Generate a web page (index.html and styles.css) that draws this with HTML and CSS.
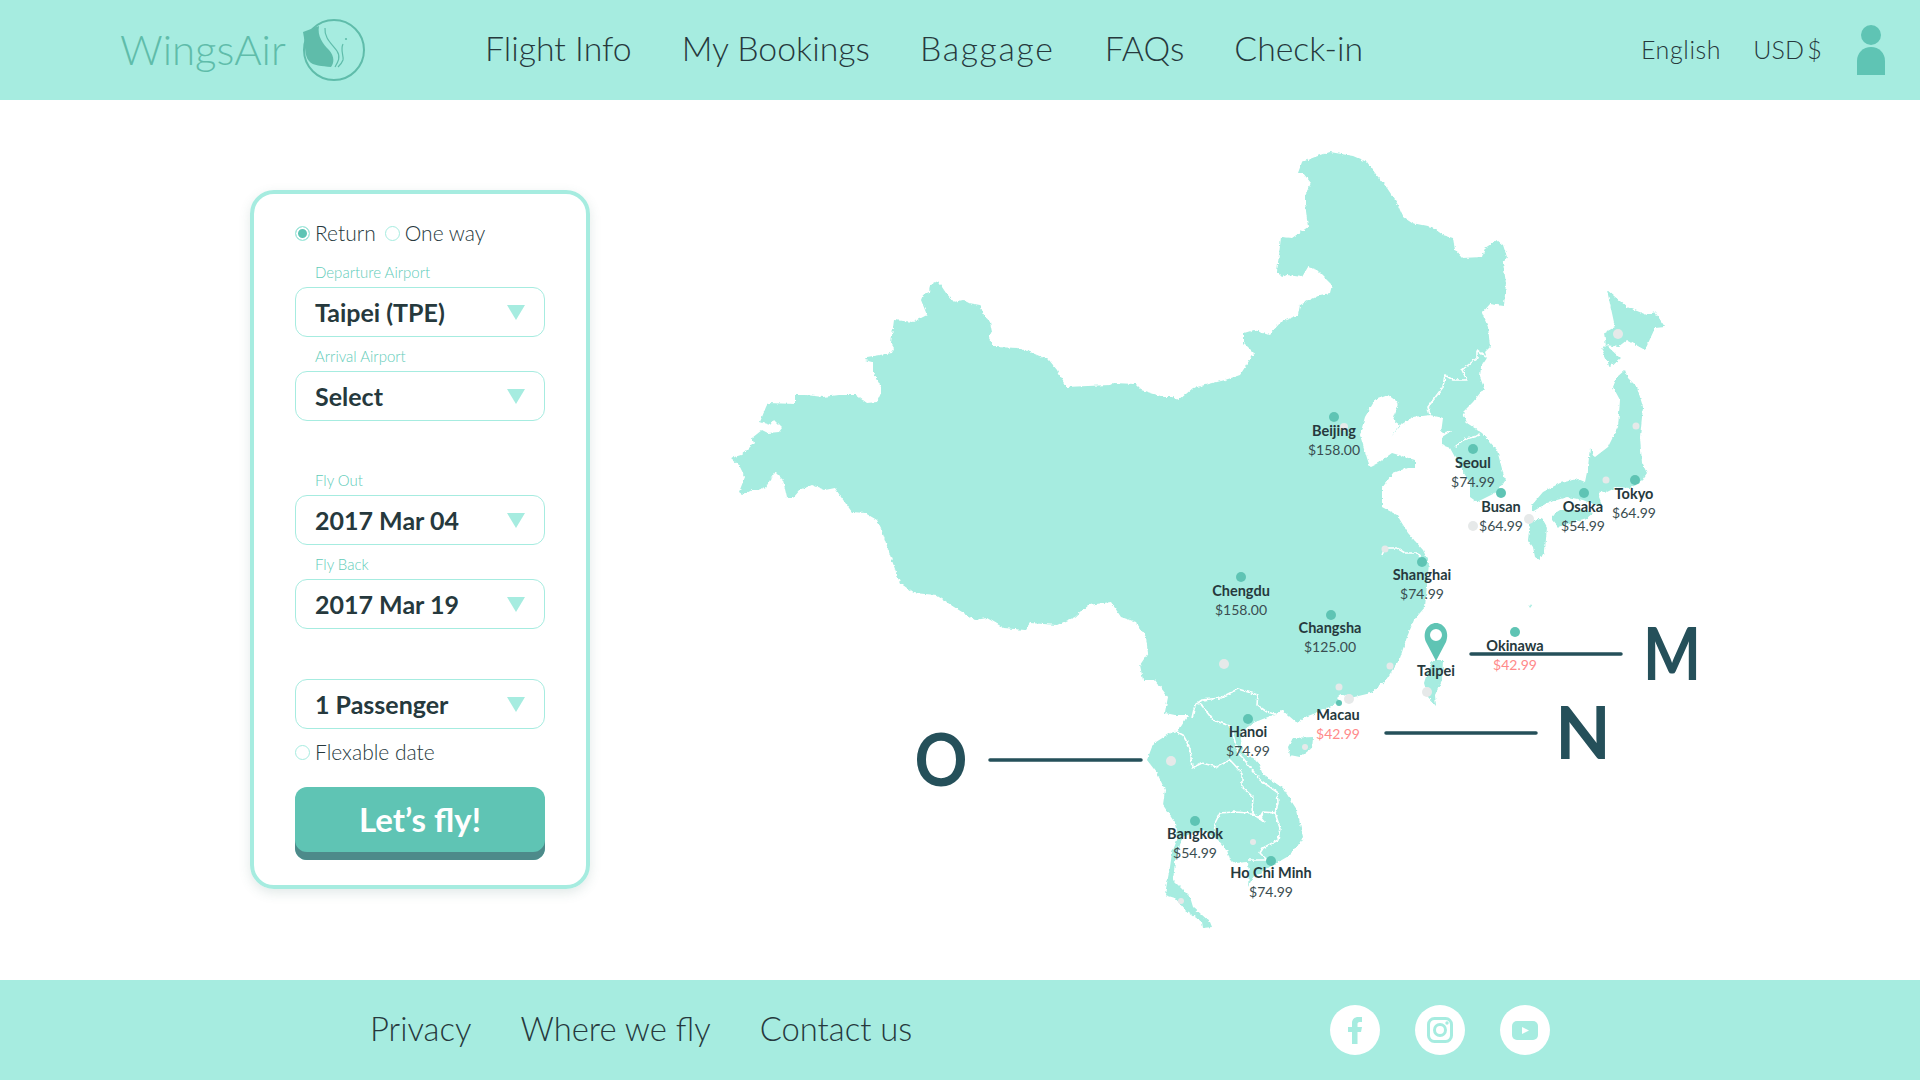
FILE: index.html
```html
<!DOCTYPE html>
<html lang="en">
<head>
    <meta charset="UTF-8">
    <meta name="viewport" content="width=device-width, initial-scale=1.0">
    <title>WingsAir</title>
    <link rel="stylesheet" href="styles.css">
</head>
<body>
    <header class="topbar">
        <a class="logo">
            <span class="logo-text">WingsAir</span>
            <svg class="logo-mark" width="68" height="64" viewBox="300 18 68 64">
                <ellipse cx="334" cy="50" rx="30" ry="30" fill="none" stroke="#5fbcaa" stroke-width="2"/>
                <path d="M303 32 L319 26 C317 36 323 44 329 50 C335 57 334 63 331 67 C322 66 313 66 309 61 C304 55 306 47 303 32 Z" fill="#5fbcaa"/>
                <path d="M325 28 C324 38 332 44 337 51 C341 57 338 62 335 67" fill="none" stroke="#5fbcaa" stroke-width="1.2"/>
                <path d="M343 44 C340 50 344 56 343 60 C342 63 340 65 338 67" fill="none" stroke="#5fbcaa" stroke-width="1.2"/>
                <circle cx="346" cy="39" r="1.1" fill="#5fbcaa"/>
            </svg>
        </a>
        <nav class="mainnav">
            <a>Flight Info</a>
            <a>My Bookings</a>
            <a class="wide">Baggage</a>
            <a>FAQs</a>
            <a>Check-in</a>
        </nav>
        <div class="topright">
            <a>English</a>
            <a class="currency">USD $</a>
            <svg class="person" width="28" height="50" viewBox="0 0 28 50">
                <circle cx="14" cy="10" r="10"/>
                <path d="M0 50 V36 C0 28 6 22 14 22 C22 22 28 28 28 36 V50 Z"/>
            </svg>
        </div>
    </header>

    <main class="page">
        <form class="card">
            <div class="radios">
                <label class="check"><span class="radio on"></span>Return</label>
                <label class="check"><span class="radio"></span>One way</label>
            </div>

            <div class="field">
                <div class="field-label">Departure Airport</div>
                <div class="select">Taipei (TPE)<span class="arrow"></span></div>
            </div>
            <div class="field">
                <div class="field-label">Arrival Airport</div>
                <div class="select">Select<span class="arrow"></span></div>
            </div>

            <div class="field group">
                <div class="field-label">Fly Out</div>
                <div class="select">2017 Mar 04<span class="arrow"></span></div>
            </div>
            <div class="field">
                <div class="field-label">Fly Back</div>
                <div class="select">2017 Mar 19<span class="arrow"></span></div>
            </div>

            <div class="field group">
                <div class="select">1 Passenger<span class="arrow"></span></div>
            </div>

            <label class="check flex-date"><span class="radio"></span>Flexable date</label>
            <button class="go" type="button">Let’s fly!</button>
        </form>

        <svg class="map" width="1000" height="880" viewBox="720 100 1000 880">
            <defs>
                <!-- makes the traced coast a bit rough -->
                <filter id="rough" x="-2%" y="-2%" width="104%" height="104%">
                    <feTurbulence type="fractalNoise" baseFrequency="0.28" numOctaves="2" seed="4"/>
                    <feDisplacementMap in="SourceGraphic" scale="3.5" xChannelSelector="R" yChannelSelector="G"/>
                </filter>
            </defs>
            <g class="rough">
                <g class="land">
                    <path d="M1298 173 L1302 162 1315 157 1330 152 1353 156 1367 162 1375 173 1387 188 1397 203 1403 217 1412 223 1432 227 1443 235 1453 238 1455 250 1462 258 1482 257 1485 248 1497 240 1503 245 1507 257 1503 263 1506 283 1504 306 1490 304 1482 313 1488 327 1490 347 1485 352 1487 358 1481 367 1480 377 1484 388 1473 402 1463 412 1467 423 1482 433 1497 450 1505 480 1497 492 1477 502 1470 497 1470 483 1462 470 1450 448 1442 445 1442 437 1453 430 1441 433 1443 418 1430 415 1413 417 1402 424 1391 437 1400 425 1393 420 1399 403 1388 395 1375 400 1365 417 1360 435 1367 458 1370 467 1378 463 1392 453 1415 460 1415 468 1407 468 1393 473 1382 488 1382 507 1397 515 1408 533 1423 550 1429 563 1425 607 1414 620 1407 637 1400 658 1386 680 1371 693 1350 698 1339 693 1338 703 1316 713 1305 717 1297 723 1302 728 1296 722 1282 710 1275 714 1253 723 1240 733 1243 753 1258 762 1263 775 1283 788 1297 810 1303 837 1297 847 1287 857 1273 865 1253 877 1248 887 1249 873 1248 862 1235 863 1230 860 1227 850 1218 840 1203 830 1195 832 1183 837 1178 850 1175 862 1173 880 1178 885 1190 897 1193 907 1210 922 1212 927 1203 928 1202 922 1185 910 1175 898 1165 895 1167 883 1170 867 1172 853 1177 840 1175 823 1163 805 1165 790 1157 773 1147 760 1152 747 1153 744 1170 733 1178 731 1182 725 1188 715 1175 715 1165 713 1168 697 1155 680 1143 680 1140 665 1148 653 1146 637 1136 622 1121 617 1111 602 1089 605 1075 617 1057 625 1030 623 1025 630 1004 628 987 618 975 620 954 607 936 595 914 593 900 583 890 555 881 528 877 520 865 513 852 512 841 497 835 488 825 490 812 485 800 490 793 498 787 498 783 480 775 472 770 480 766 487 758 490 752 490 743 495 739 492 745 477 739 465 731 458 741 455 747 450 754 443 752 438 762 430 768 433 779 432 782 428 774 420 770 425 760 422 766 407 768 403 795 404 795 395 806 395 823 397 839 395 856 395 867 403 877 402 881 393 881 387 873 372 873 362 865 360 867 357 892 353 894 348 891 343 894 320 913 322 927 315 921 300 923 295 929 292 930 285 938 281 946 293 954 302 963 300 969 303 980 305 984 315 990 322 992 332 989 338 994 347 1018 348 1030 352 1049 360 1057 370 1066 387 1110 385 1114 383 1135 384 1141 390 1164 397 1173 397 1179 400 1193 388 1225 380 1240 375 1254 353 1244 343 1244 333 1254 330 1269 335 1281 322 1298 315 1300 305 1320 295 1330 293 1332 285 1317 270 1308 267 1302 277 1287 275 1282 277 1277 272 1281 237 1292 238 1308 227 1305 203 1305 195 1311 183 1303 173 Z"/>
                    <path d="M1288 747 L1293 738 1313 737 1312 748 1300 757 1290 755 Z"/>
                    <path d="M1433 660 L1443 660 1442 680 1435 695 1436 706 1428 697 1424 683 1428 670 Z"/>
                    <path d="M1607 290 L1627 307 1647 315 1655 312 1665 327 1655 328 1645 350 1627 340 1618 347 1607 345 1602 350 1610 367 1620 358 1606 345 1604 333 1615 327 Z"/>
                    <path d="M1625 370 L1628 378 1637 387 1643 407 1640 437 1642 463 1647 473 1640 483 1630 488 1617 487 1607 492 1600 490 1599 497 1603 507 1590 503 1583 500 1567 497 1547 503 1532 512 1532 505 1543 492 1560 483 1578 479 1585 482 1588 467 1590 448 1595 457 1608 447 1618 427 1620 400 1613 387 1617 377 Z"/>
                    <path d="M1552 515 L1560 510 1583 510 1593 513 1587 518 1570 523 1558 527 1552 520 Z"/>
                    <path d="M1530 523 L1542 518 1547 527 1545 550 1540 560 1535 557 1533 547 1528 540 Z"/>
                    <path d="M1529 606 L1533 604 1530 608 Z"/>
                </g>

                <g class="borders">
                    <path d="M1430 415 L1428 407 1443 387 1445 375 1453 380 1467 380 1462 370 1477 358 1477 350 1486 357"/>
                    <path d="M1455 447 L1463 440 1480 435"/>
                    <path d="M1382 555 L1385 548 1397 548 1405 553 1417 553 1421 558"/>
                    <path d="M1192 718 L1195 705 1202 700 1220 698 1238 689 1258 695 1257 705 1267 712 1275 714"/>
                    <path d="M1200 703 L1213 720 1230 726 1234 738 1238 753 1243 758 1260 780 1277 792 1278 803 1275 813 1263 812 1260 817 1264 822 1252 813"/>
                    <path d="M1177 732 L1183 735 1190 748 1192 768 1202 763 1217 767 1230 760 1242 773 1242 787 1253 797 1252 813 1233 812 1220 813 1215 823 1214 840"/>
                    <path d="M1275 813 L1280 828 1278 840 1263 848 1260 853 1267 860 1248 860"/>
                </g>
            </g>

            <g class="spot">
                <circle cx="1344" cy="427" r="4"/>
                <circle cx="1618" cy="334" r="5"/>
                <circle cx="1636" cy="426" r="3.5"/>
                <circle cx="1606" cy="480" r="3.5"/>
                <circle cx="1473" cy="526" r="5"/>
                <circle cx="1529" cy="519" r="5"/>
                <circle cx="1385" cy="549" r="3.5"/>
                <circle cx="1224" cy="664" r="5"/>
                <circle cx="1390" cy="666" r="3.5"/>
                <circle cx="1339" cy="687" r="3.5"/>
                <circle cx="1349" cy="699" r="5"/>
                <circle cx="1427" cy="692" r="5"/>
                <circle cx="1305" cy="747" r="3"/>
                <circle cx="1171" cy="761" r="5"/>
                <circle cx="1253" cy="842" r="3"/>
                <circle cx="1181" cy="901" r="3"/>
            </g>

            <g class="stop"><circle cx="1334" cy="417" r="5"/><text class="city" x="1334" y="436">Beijing</text><text class="fare" x="1334" y="455">$158.00</text></g>
            <g class="stop"><circle cx="1473" cy="449" r="5"/><text class="city" x="1473" y="468">Seoul</text><text class="fare" x="1473" y="487">$74.99</text></g>
            <g class="stop"><circle cx="1501" cy="493" r="5"/><text class="city" x="1501" y="512">Busan</text><text class="fare" x="1501" y="531">$64.99</text></g>
            <g class="stop"><circle cx="1584" cy="493" r="5"/><text class="city" x="1583" y="512">Osaka</text><text class="fare" x="1583" y="531">$54.99</text></g>
            <g class="stop"><circle cx="1635" cy="480" r="5"/><text class="city" x="1634" y="499">Tokyo</text><text class="fare" x="1634" y="518">$64.99</text></g>
            <g class="stop"><circle cx="1422" cy="562" r="5"/><text class="city" x="1422" y="580">Shanghai</text><text class="fare" x="1422" y="599">$74.99</text></g>
            <g class="stop"><circle cx="1241" cy="577" r="5"/><text class="city" x="1241" y="596">Chengdu</text><text class="fare" x="1241" y="615">$158.00</text></g>
            <g class="stop"><circle cx="1331" cy="615" r="5"/><text class="city" x="1330" y="633">Changsha</text><text class="fare" x="1330" y="652">$125.00</text></g>
            <g class="stop"><circle cx="1339" cy="703" r="3"/><text class="city" x="1338" y="720">Macau</text><text class="fare deal" x="1338" y="739">$42.99</text></g>
            <g class="stop"><circle cx="1248" cy="719" r="5"/><text class="city" x="1248" y="737">Hanoi</text><text class="fare" x="1248" y="756">$74.99</text></g>
            <g class="stop"><circle cx="1195" cy="821" r="5"/><text class="city" x="1195" y="839">Bangkok</text><text class="fare" x="1195" y="858">$54.99</text></g>
            <g class="stop"><circle cx="1271" cy="861" r="5"/><text class="city" x="1271" y="878">Ho Chi Minh</text><text class="fare" x="1271" y="897">$74.99</text></g>
            <g class="stop"><circle cx="1515" cy="632" r="5"/><text class="city" x="1515" y="651">Okinawa</text><text class="fare deal" x="1515" y="670">$42.99</text></g>

            <path class="stop-pin" fill-rule="evenodd" d="M1436 661 L1426 642 C1422 632 1428 623 1436 623 C1444 623 1450 632 1446 642 Z M1436 629 A6 6 0 1 0 1436 641 A6 6 0 1 0 1436 629 Z"/>
            <text class="city" x="1436" y="676">Taipei</text>

            <line class="callout" x1="990" y1="760" x2="1141" y2="760"/>
            <line class="callout" x1="1386" y1="733" x2="1536" y2="733"/>
            <line class="callout" x1="1471" y1="654" x2="1621" y2="654"/>
            <text class="mark" x="941" y="786" textLength="53" lengthAdjust="spacingAndGlyphs">O</text>
            <text class="mark" x="1583" y="759">N</text>
            <text class="mark" x="1672" y="680" textLength="58" lengthAdjust="spacingAndGlyphs">M</text>
        </svg>
    </main>

    <footer class="bottombar">
        <nav class="footnav">
            <a>Privacy</a>
            <a>Where we fly</a>
            <a>Contact us</a>
        </nav>
        <div class="social">
            <svg width="50" height="50" viewBox="0 0 50 50">
                <circle class="disc" cx="25" cy="25" r="25"/>
                <path class="glyph" d="M22 39 V27 H18 V22 H22 V18 C22 14 25 12 28 12 H32 V17 H29.5 C28 17 27.5 18 27.5 19 V22 H32 L31 27 H27.5 V39 Z"/>
            </svg>
            <svg width="50" height="50" viewBox="0 0 50 50">
                <circle class="disc" cx="25" cy="25" r="25"/>
                <rect class="line" x="13.5" y="13.5" width="23" height="23" rx="6"/>
                <circle class="line" cx="25" cy="25" r="5.5"/>
                <circle class="glyph" cx="32" cy="18" r="1.7"/>
            </svg>
            <svg width="50" height="50" viewBox="0 0 50 50">
                <circle class="disc" cx="25" cy="25" r="25"/>
                <rect class="glyph" x="12" y="16" width="26" height="19" rx="5"/>
                <path class="disc" d="M22 22 L29 25.5 22 29 Z"/>
            </svg>
        </div>
    </footer>
</body>
</html>
```

FILE: styles.css
```css
* {
    box-sizing: border-box;
}
body {
    margin: 0;
    font-family: Lato, "Open Sans", sans-serif;
    color: #26393d;
    background-color: #fff;
}

/* top bar */
.topbar {
    height: 100px;
    background-color: #a6ece0;
    display: flex;
    align-items: center;
    padding-left: 120px;
    padding-right: 35px;
}
.logo {
    display: flex;
    align-items: center;
    width: 365px;
}
.logo-text {
    font-size: 42px;
    font-weight: 300;
    color: #5fbcaa;
    width: 180px;
    padding-bottom: 2px;
}
.mainnav {
    display: flex;
    gap: 50px;
    padding-bottom: 5px;
    font-size: 33.8px;
    font-weight: 300;
}
.wide {
    letter-spacing: 1.7px;
}
.topright {
    margin-left: auto;
    display: flex;
    align-items: center;
    gap: 32px;
    font-size: 25px;
    font-weight: 300;
    letter-spacing: 0.6px;
}
.topright a {
    padding-bottom: 3px;
}
.currency {
    letter-spacing: 0.2px;
    word-spacing: -4px;
}
.person {
    margin-left: 3px;
    fill: #5fc4b4;
}

/* search form */
.page {
    display: flex;
    height: 880px;
}
.card {
    width: 340px;
    height: 699px;
    margin: 90px 0 0 250px;
    padding: 30px 41px 0;
    border: 4px solid #a6ece0;
    border-radius: 24px;
    box-shadow: 0 4px 12px rgba(60, 110, 100, 0.15);
}
.radios {
    display: flex;
    gap: 9px;
}
.check {
    display: flex;
    align-items: center;
    height: 18px;
    padding-bottom: 1px;
    font-size: 21px;
    font-weight: 300;
}
.radio {
    flex: none;
    width: 15px;
    height: 15px;
    margin-top: 1px;
    margin-right: 5px;
    border: 1px solid #a6ece0;
    border-radius: 50%;
    background-color: #fff;
}
.radio.on {
    background-color: #5fc4b4;
    box-shadow: inset 0 0 0 2px #fff;
}
.field {
    margin-top: 10px;
}
.radios + .field {
    margin-top: 21px;
}
.field.group {
    margin-top: 50px;
}
.field-label {
    height: 18px;
    line-height: 18px;
    margin-bottom: 6px;
    padding-left: 20px;
    font-size: 15px;
    font-weight: 300;
    color: #62ccb9;
}
.select {
    position: relative;
    height: 50px;
    line-height: 48px;
    padding-left: 19px;
    border: 1px solid #a6ece0;
    border-radius: 12px;
    font-size: 25px;
    font-weight: 700;
}
.arrow {
    position: absolute;
    right: 19px;
    top: 17px;
    border-left: 9px solid transparent;
    border-right: 9px solid transparent;
    border-top: 15px solid #a6ece0;
}
.flex-date {
    margin-top: 14px;
}
.go {
    display: block;
    width: 250px;
    height: 73px;
    margin-top: 26px;
    padding: 0 0 9px;
    border: 0;
    border-radius: 12px;
    background-color: #5fc4b4;
    box-shadow: inset 0 -8px 0 #4d8a8a;
    color: #fff;
    font-family: Lato, sans-serif;
    font-size: 33px;
    font-weight: 700;
}

/* map */
.map {
    display: block;
    margin-left: 130px;
}
.rough {
    filter: url(#rough);
}
.land {
    fill: #a6ece0;
}
.borders path {
    fill: none;
    stroke: #fff;
    stroke-width: 1.6;
    stroke-linejoin: round;
}
.spot {
    fill: #e6e9e9;
}
.stop circle {
    fill: #5fc4b4;
}
.stop-pin {
    fill: #5fc4b4;
}
.city, .fare {
    text-anchor: middle;
    font-size: 14px;
    fill: #26393d;
}
.city {
    font-size: 14.5px;
    font-weight: 700;
}
.fare {
    font-weight: 400;
    fill: #3a4d50;
}
.fare.deal {
    fill: #ff8a8a;
}
.callout {
    stroke: #25505a;
    stroke-width: 3.5;
    stroke-linecap: round;
}
.mark {
    text-anchor: middle;
    font-size: 72px;
    font-weight: 700;
    fill: #25505a;
}

/* footer */
.bottombar {
    height: 100px;
    background-color: #a6ece0;
    display: flex;
    align-items: center;
    padding-left: 370px;
}
.footnav {
    display: flex;
    gap: 49px;
    padding-bottom: 4px;
    font-size: 32.8px;
    font-weight: 300;
}
.social {
    display: flex;
    gap: 35px;
    margin-left: 418px;
}
.social svg {
    display: block;
}
.disc {
    fill: #fff;
}
.glyph {
    fill: #a6ece0;
}
.line {
    fill: none;
    stroke: #a6ece0;
    stroke-width: 3;
}
```
